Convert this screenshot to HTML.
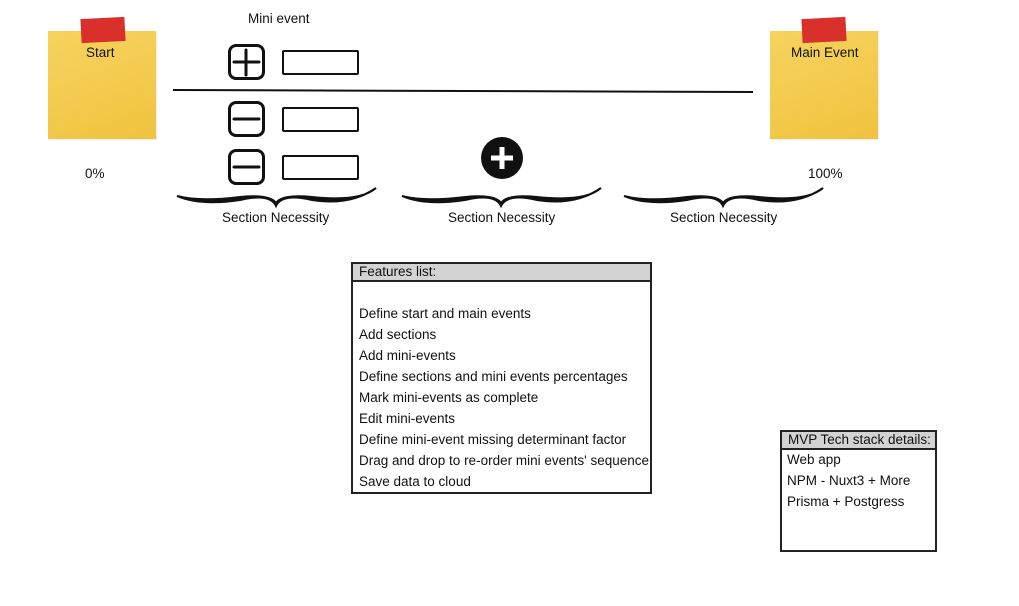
<!DOCTYPE html>
<html><head><meta charset="utf-8">
<style>
*{margin:0;padding:0;box-sizing:border-box}
body{width:1019px;height:606px;background:#fff;position:relative;overflow:hidden;font-family:"Liberation Sans",sans-serif;font-size:13.5px;color:#111}
.a{position:absolute}
.t{position:absolute;white-space:nowrap}
.note{position:absolute;width:108px;height:108px;background:linear-gradient(160deg,#f6d35f,#f0c33e);box-shadow:1px 1px 1px rgba(0,0,0,.08)}
.tape{position:absolute;width:44px;height:24px;background:#d9302c;transform:rotate(-3deg)}
.btn{position:absolute;width:37px;height:36px;border:3px solid #111;border-radius:8px}
.box{position:absolute;width:77px;height:25px;border:2px solid #111;border-radius:2px}
.list{position:absolute;border:2px solid #222;background:#fff}
.list .h{background:#d3d3d3;border-bottom:2px solid #222;height:18px;padding-left:6px;line-height:16px}
.list div.i{padding-left:6px;height:21px;line-height:21px}
</style></head><body>
<div class="note" style="left:48px;top:31px"></div>
<div class="tape" style="left:81px;top:18px"></div>
<div class="t" style="left:86px;top:45px">Start</div>
<div class="note" style="left:770px;top:31px"></div>
<div class="tape" style="left:802px;top:18px"></div>
<div class="t" style="left:791px;top:45px">Main Event</div>
<div class="t" style="left:248px;top:11px">Mini event</div>
<div class="t" style="left:85px;top:166px">0%</div>
<div class="t" style="left:808px;top:166px">100%</div>

<div class="btn" style="left:228px;top:44px"></div>
<div class="btn" style="left:228px;top:101px"></div>
<div class="btn" style="left:228px;top:149px"></div>
<div class="box" style="left:282px;top:50px"></div>
<div class="box" style="left:282px;top:107px"></div>
<div class="box" style="left:282px;top:155px"></div>

<svg class="a" style="left:0;top:0" width="1019" height="606">
<g stroke="#111" stroke-width="3" stroke-linecap="round">
<line x1="246" y1="50" x2="246" y2="75"/><line x1="234" y1="62" x2="259" y2="62"/>
<line x1="234" y1="119" x2="259" y2="119"/>
<line x1="234" y1="167" x2="259" y2="167"/>
</g>
<path d="M173 90 Q460 91 753 92" stroke="#111" stroke-width="2" fill="none"/>
<circle cx="502" cy="158" r="21" fill="#111"/>
<g stroke="#fff" stroke-width="5"><line x1="502" y1="147" x2="502" y2="169"/><line x1="491" y1="158" x2="513" y2="158"/></g>
<g fill="#111">
<path d="M177 196 Q200 206 240 200 Q270 193 276 206 Q282 193 312 200 Q350 206 376 188 Q360 202 312 197 Q282 194 276 203 Q270 194 240 197 Q200 202 177 196Z" stroke="#111" stroke-width="2"/>
<path d="M402 196 Q425 206 465 200 Q495 193 501 206 Q507 193 537 200 Q575 206 601 188 Q585 202 537 197 Q507 194 501 203 Q495 194 465 197 Q425 202 402 196Z" stroke="#111" stroke-width="2"/>
<path d="M624 196 Q647 206 687 200 Q717 193 723 206 Q729 193 759 200 Q797 206 823 188 Q807 202 759 197 Q729 194 723 203 Q717 194 687 197 Q647 202 624 196Z" stroke="#111" stroke-width="2"/>
</g>
</svg>
<div class="t" style="left:222px;top:210px">Section Necessity</div>
<div class="t" style="left:448px;top:210px">Section Necessity</div>
<div class="t" style="left:670px;top:210px">Section Necessity</div>

<div class="list" style="left:351px;top:262px;width:301px;height:232px">
<div class="h">Features list:</div>
<div style="height:21px"></div>
<div class="i">Define start and main events</div>
<div class="i">Add sections</div>
<div class="i">Add mini-events</div>
<div class="i">Define sections and mini events percentages</div>
<div class="i">Mark mini-events as complete</div>
<div class="i">Edit mini-events</div>
<div class="i">Define mini-event missing determinant factor</div>
<div class="i">Drag and drop to re-order mini events' sequence</div>
<div class="i">Save data to cloud</div>
</div>

<div class="list" style="left:780px;top:430px;width:157px;height:122px">
<div class="h">MVP Tech stack details:</div>
<div class="i" style="padding-left:5px;height:20px;line-height:20px">Web app</div>
<div class="i" style="padding-left:5px;height:21px;line-height:21px">NPM - Nuxt3 + More</div>
<div class="i" style="padding-left:5px;height:21px;line-height:21px">Prisma + Postgress</div>
</div>
</body></html>
